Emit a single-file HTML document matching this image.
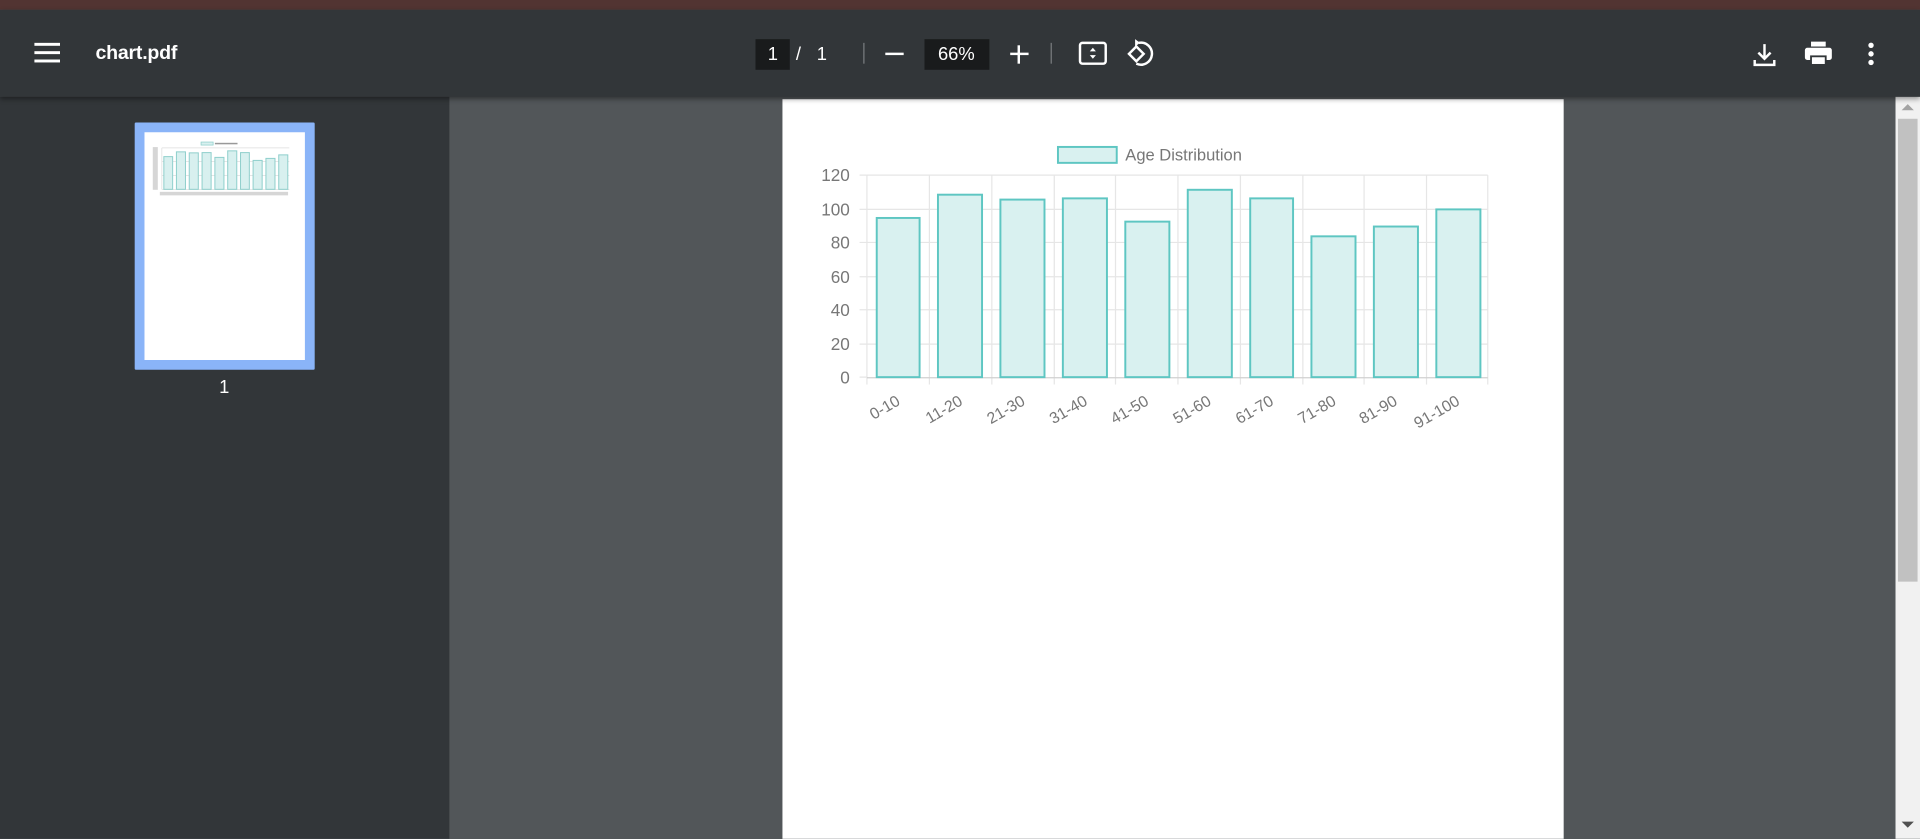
<!DOCTYPE html>
<html><head><meta charset="utf-8"><style>
html,body{margin:0;padding:0;width:1920px;height:839px;overflow:hidden;background:#525659;font-family:"Liberation Sans",sans-serif}
#w{position:absolute;left:0;top:0;width:1568px;height:685px;transform:scale(1.22449);transform-origin:0 0}
.a{position:absolute}
.t{color:#fff;font-size:16px}
</style></head><body><div id="w">
<div class="a" style="left:0;top:0;width:1568px;height:8px;background:#523432"></div>
<div class="a" style="left:0;top:8px;width:1568px;height:71px;background:#323639;box-shadow:0 2px 4px rgba(0,0,0,.4);z-index:2"></div>
<div class="a" style="left:0;top:79px;width:367px;height:606px;background:#323639"></div>
<div class="a" style="left:1548px;top:79px;width:20px;height:606px;background:#f1f1f1"></div>
<div class="a" style="left:1550px;top:97px;width:16px;height:378px;background:#c1c1c1"></div>
<div class="a" style="left:1553px;top:85px;width:0;height:0;border:5px solid transparent;border-bottom-color:#a3a3a3;border-top:0"></div>
<div class="a" style="left:1553px;top:671px;width:0;height:0;border:5px solid transparent;border-top-color:#505050;border-bottom:0"></div>
<div style="position:absolute;z-index:3;left:0;top:8px;width:1568px;height:71px">
<svg class="a" style="left:28px;top:26px" width="22" height="18"><rect x="0" y="1" width="21" height="2.4" fill="#fff"/><rect x="0" y="7.8" width="21" height="2.4" fill="#fff"/><rect x="0" y="14.6" width="21" height="2.4" fill="#fff"/></svg>
<div class="a t" style="left:78px;top:27px;font-size:16px;font-weight:bold;letter-spacing:-0.2px">chart.pdf</div>
<div class="a" style="left:617px;top:24px;width:28px;height:25px;background:#191b1c"></div>
<div class="a t" style="left:627px;top:28px;font-size:15px">1</div>
<div class="a t" style="left:650px;top:28px;font-size:15px">/</div>
<div class="a t" style="left:667px;top:28px;font-size:15px">1</div>
<div class="a" style="left:705px;top:27px;width:1px;height:17px;background:#7a7d80"></div>
<div class="a" style="left:723px;top:35px;width:15px;height:2px;background:#fff"></div>
<div class="a" style="left:755px;top:24px;width:53px;height:25px;background:#191b1c"></div>
<div class="a t" style="left:766px;top:28px;font-size:15px">66%</div>
<div class="a" style="left:825px;top:35px;width:15px;height:2px;background:#fff"></div>
<div class="a" style="left:831px;top:29px;width:2px;height:15px;background:#fff"></div>
<div class="a" style="left:858px;top:27px;width:1px;height:17px;background:#7a7d80"></div>
<svg class="a" style="left:880px;top:24px" width="26" height="24"><rect x="2" y="3" width="21" height="17" rx="2" fill="none" stroke="#fff" stroke-width="2"/><path d="M12.5 7l-2.5 3h5z M12.5 16l-2.5-3h5z" fill="#fff"/></svg>
<svg class="a" style="left:918px;top:22px" width="26" height="28"><path d="M4 14l6-6 6 6-6 6z" fill="none" stroke="#fff" stroke-width="2"/><path d="M12 5a9 9 0 1 1 -2 17" fill="none" stroke="#fff" stroke-width="2"/><path d="M9 2l4 3-4 3z" fill="#fff"/></svg>
<svg class="a" style="left:1430px;top:26px" width="22" height="22"><path d="M11 2v11 M6 9l5 5 5-5 M3 15v4h16v-4" fill="none" stroke="#fff" stroke-width="2"/></svg>
<svg class="a" style="left:1473px;top:25px" width="24" height="22"><rect x="6" y="1" width="12" height="4" fill="#fff"/><rect x="1" y="6" width="22" height="10" rx="2" fill="#fff"/><rect x="6" y="13" width="12" height="7" fill="#fff" stroke="#323639" stroke-width="1.5"/></svg>
<svg class="a" style="left:1524px;top:26px" width="8" height="22"><circle cx="4" cy="3" r="2.2" fill="#fff"/><circle cx="4" cy="10" r="2.2" fill="#fff"/><circle cx="4" cy="17" r="2.2" fill="#fff"/></svg>
</div>
<div class="a" style="left:110px;top:100px;width:131px;height:186px;border:8px solid #8ab4f8;border-radius:1px;background:#fff">
<svg width="131" height="186" viewBox="0 0 638 604" preserveAspectRatio="xMidYMin meet"><g transform="translate(-639,-81)">
<g stroke="#ddd" stroke-width="3"><path d="M708 143H1215M708 198H1215M708 253H1215M708 308H1215M708 143V308"/></g>
<g fill="#d8f0ef" stroke="#8fcfcc" stroke-width="4">
<rect x="716" y="178" width="35" height="130"/><rect x="766" y="159" width="36" height="149"/><rect x="817" y="163" width="36" height="145"/><rect x="868" y="162" width="36" height="146"/><rect x="919" y="181" width="36" height="127"/><rect x="970" y="155" width="36" height="153"/><rect x="1021" y="162" width="35" height="146"/><rect x="1071" y="193" width="36" height="115"/><rect x="1122" y="185" width="36" height="123"/><rect x="1173" y="171" width="36" height="137"/></g>
<rect x="864" y="120" width="48" height="12" fill="#d8f0ef" stroke="#8fcfcc" stroke-width="3"/>
<g fill="#999"><rect x="919" y="123" width="90" height="6"/><rect x="672" y="140" width="20" height="170" opacity=".4"/><rect x="700" y="318" width="510" height="14" opacity=".4"/></g></g></svg>
</div>
<div class="a" style="left:179px;top:308px;color:#fff;font-size:15px">1</div>
<div class="a" style="left:639px;top:81px;width:638px;height:604px;background:#fff"></div>
<svg class="a" style="left:0;top:0" width="1568" height="685" font-family="Liberation Sans, sans-serif">
<g stroke="#e6e6e6" stroke-width="1">
<path d="M708 143H1215M708 171H1215M708 198H1215M708 226H1215M708 253H1215M708 281H1215"/>
<path d="M759 143V314M810 143V314M861 143V314M911 143V314M962 143V314M1013 143V314M1064 143V314M1114 143V314M1165 143V314M1215 143V314M708 143V314"/>
<path d="M702 143H708M702 171H708M702 198H708M702 226H708M702 253H708M702 281H708M702 308H708"/>
</g>
<path d="M708 308.5H1215" stroke="#d0d0d0"/>
<g fill="#d9f1f0" stroke="#5ec6c2" stroke-width="1.6">
<rect x="716" y="178" width="35" height="130"/><rect x="766" y="159" width="36" height="149"/><rect x="817" y="163" width="36" height="145"/><rect x="868" y="162" width="36" height="146"/><rect x="919" y="181" width="36" height="127"/><rect x="970" y="155" width="36" height="153"/><rect x="1021" y="162" width="35" height="146"/><rect x="1071" y="193" width="36" height="115"/><rect x="1122" y="185" width="36" height="123"/><rect x="1173" y="171" width="36" height="137"/>
<rect x="864" y="120" width="48" height="13"/></g>
<text x="919" y="131" font-size="13.5" fill="#777">Age Distribution</text>
<g font-size="14" fill="#777" text-anchor="end">
<text x="694" y="148">120</text><text x="694" y="176">100</text><text x="694" y="203">80</text><text x="694" y="231">60</text><text x="694" y="258">40</text><text x="694" y="286">20</text><text x="694" y="313">0</text></g>
<g font-size="13" fill="#777" text-anchor="end">
<text transform="translate(736,330) rotate(-30)">0-10</text>
<text transform="translate(787,330) rotate(-30)">11-20</text>
<text transform="translate(838,330) rotate(-30)">21-30</text>
<text transform="translate(889,330) rotate(-30)">31-40</text>
<text transform="translate(939,330) rotate(-30)">41-50</text>
<text transform="translate(990,330) rotate(-30)">51-60</text>
<text transform="translate(1041,330) rotate(-30)">61-70</text>
<text transform="translate(1092,330) rotate(-30)">71-80</text>
<text transform="translate(1142,330) rotate(-30)">81-90</text>
<text transform="translate(1193,330) rotate(-30)">91-100</text></g>
</svg>
</div></body></html>
